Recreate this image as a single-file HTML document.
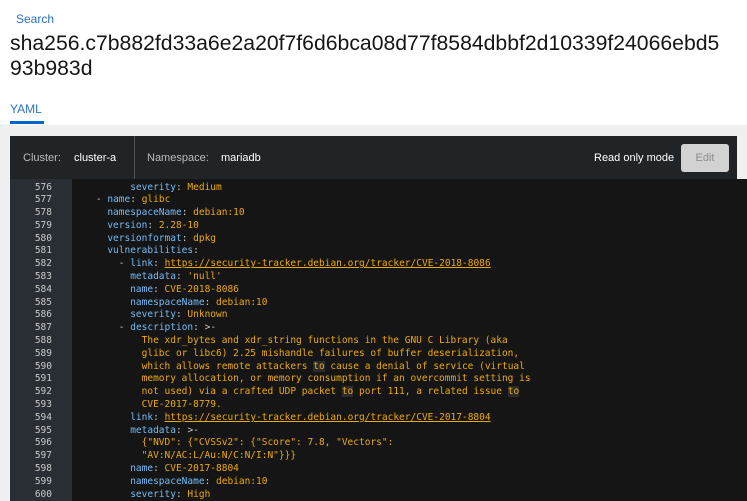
<!DOCTYPE html>
<html><head><meta charset="utf-8"><style>
*{margin:0;padding:0;box-sizing:border-box}
body{width:747px;height:501px;overflow:hidden;background:#fff;font-family:"Liberation Sans",sans-serif;position:relative}
.crumb{position:absolute;left:16px;top:12px;font-size:12px;color:#2b72c2}
h1{position:absolute;left:10px;top:31px;width:712px;font-weight:400;font-size:21.2px;line-height:25px;color:#151515;word-break:break-all}
.tab{position:absolute;left:10px;top:102px;font-size:12px;color:#2b72c2}
.tabline{position:absolute;left:10px;top:121px;width:34px;height:3px;background:#06c}
.band{position:absolute;left:0;top:125px;width:747px;height:376px;background:#f0f0f0}
.tb{position:absolute;left:10px;top:136px;width:727px;height:43px;background:#212427;color:#d2d2d2;font-size:11px}
.tb span{position:absolute;top:16px}
.sep{position:absolute;left:124px;top:0;width:1px;height:43px;background:#4f5255}
.edit{position:absolute;left:671px;top:8px;width:48px;height:28px;background:#d2d2d2;border-radius:3px;color:#8a8d90;font-size:11px;text-align:center;line-height:28px}
.code{position:absolute;left:10px;top:179px;width:737px;height:322px;background:#151515}
.gut{position:absolute;left:0;top:0;width:62px;height:322px;background:#292e34}
pre{position:absolute;top:2.5px;font-family:"DejaVu Sans Mono",monospace;font-size:9.5px;line-height:12.8px}
.ln{left:0;width:42px;text-align:right;color:#c8c8c8}
.tx{left:63px;color:#f0ab00}
.k{color:#73bcf7}.p{color:#c8c8c8}.u{text-decoration:underline}.h{background:#2c2c2c}
</style></head><body>
<div class="crumb">Search</div>
<h1>sha256.c7b882fd33a6e2a20f7f6d6bca08d77f8584dbbf2d10339f24066ebd593b983d</h1>
<div class="tab">YAML</div><div class="tabline"></div>
<div class="band"></div>
<div class="tb"><span style="left:13px;color:#b8bbbe">Cluster:</span><span style="left:64px;color:#fff">cluster-a</span><div class="sep"></div><span style="left:137px;color:#b8bbbe">Namespace:</span><span style="left:211px;color:#fff">mariadb</span><span style="left:584px;color:#fff">Read only mode</span><div class="edit">Edit</div></div>
<div class="code"><div class="gut"></div>
<pre class="ln">576
577
578
579
580
581
582
583
584
585
586
587
588
589
590
591
592
593
594
595
596
597
598
599
600</pre>
<pre class="tx">          <span class="k">severity</span><span class="p">:</span> Medium
    <span class="p">-</span> <span class="k">name</span><span class="p">:</span> glibc
      <span class="k">namespaceName</span><span class="p">:</span> debian:10
      <span class="k">version</span><span class="p">:</span> 2.28-10
      <span class="k">versionformat</span><span class="p">:</span> dpkg
      <span class="k">vulnerabilities</span><span class="p">:</span>
        <span class="p">-</span> <span class="k">link</span><span class="p">:</span> <span class="u">https://security-tracker.debian.org/tracker/CVE-2018-8086</span>
          <span class="k">metadata</span><span class="p">:</span> 'null'
          <span class="k">name</span><span class="p">:</span> CVE-2018-8086
          <span class="k">namespaceName</span><span class="p">:</span> debian:10
          <span class="k">severity</span><span class="p">:</span> Unknown
        <span class="p">-</span> <span class="k">description</span><span class="p">:</span> <span class="p">&gt;-</span>
            The xdr_bytes and xdr_string functions in the GNU C Library (aka
            glibc or libc6) 2.25 mishandle failures of buffer deserialization,
            which allows remote attackers <span class="h">to</span> cause a denial of service (virtual
            memory allocation, or memory consumption if an overcommit setting is
            not used) via a crafted UDP packet <span class="h">to</span> port 111, a related issue <span class="h">to</span>
            CVE-2017-8779.
          <span class="k">link</span><span class="p">:</span> <span class="u">https://security-tracker.debian.org/tracker/CVE-2017-8804</span>
          <span class="k">metadata</span><span class="p">:</span> <span class="p">&gt;-</span>
            {"NVD": {"CVSSv2": {"Score": 7.8, "Vectors":
            "AV:N/AC:L/Au:N/C:N/I:N"}}}
          <span class="k">name</span><span class="p">:</span> CVE-2017-8804
          <span class="k">namespaceName</span><span class="p">:</span> debian:10
          <span class="k">severity</span><span class="p">:</span> High</pre>
</div>
</body></html>
